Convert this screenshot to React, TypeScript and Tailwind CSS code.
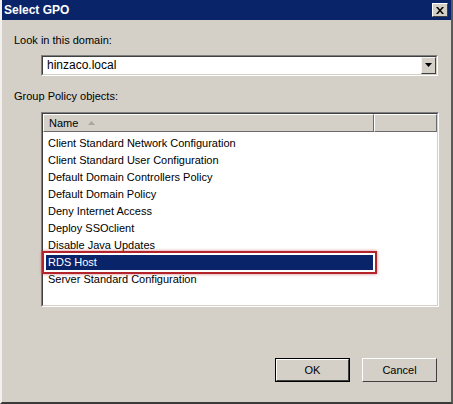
import { useState } from 'react'

const items = [
  'Client Standard Network Configuration',
  'Client Standard User Configuration',
  'Default Domain Controllers Policy',
  'Default Domain Policy',
  'Deny Internet Access',
  'Deploy SSOclient',
  'Disable Java Updates',
  'RDS Host',
  'Server Standard Configuration',
]

const font = { fontFamily: '"Liberation Sans", Arial, sans-serif' }

export default function App() {
  const [selected, setSelected] = useState('RDS Host')

  return (
    <div
      className="flex h-[404px] w-[453px] flex-col overflow-hidden border-b-2 border-l-2 border-r-2 border-b-[#3a3a3a] border-l-[#f2f0ec] border-r-[#5a5a5a] bg-[#d4d0c8] text-[11px] text-black"
      style={font}
    >
      {/* title bar */}
      <div className="flex h-[20px] items-center justify-between bg-[#0a246a] pl-[2px] pr-[3px]">
        <span className="text-[12px] font-bold text-white">Select GPO</span>
        <button className="flex h-[14px] w-[16px] items-center justify-center border border-b-[#404040] border-l-white border-r-[#404040] border-t-white bg-[#d4d0c8]">
          <svg width="8" height="7" viewBox="0 0 8 7">
            <path d="M0 0h2l2 2.5L6 0h2L5 3.5 8 7H6L4 4.5 2 7H0l3-3.5z" fill="#000" />
          </svg>
        </button>
      </div>

      <div className="flex flex-1 flex-col px-[12px]">
        <div className="mt-[12px]">Look in this domain:</div>

        {/* domain combo */}
        <div className="ml-[27px] mr-[1px] mt-[6px] flex h-[21px] border border-b-white border-l-[#808080] border-r-white border-t-[#808080]">
          <div className="flex flex-1 items-center border border-b-[#d4d0c8] border-l-[#404040] border-r-[#d4d0c8] border-t-[#404040] bg-white">
            <span className="flex-1 pl-[4px] text-[12px]">hinzaco.local</span>
            <div className="flex h-full w-[15px] items-center justify-center border border-b-[#404040] border-l-[#f4f4f4] border-r-[#404040] border-t-[#f4f4f4] bg-[#d4d0c8]">
              <svg width="7" height="4" viewBox="0 0 7 4">
                <path d="M0 0h7L3.5 4z" fill="#000" />
              </svg>
            </div>
          </div>
        </div>

        <div className="mt-[12px]">Group Policy objects:</div>

        {/* list view */}
        <div className="ml-[27px] mt-[8px] flex h-[195px] flex-col border border-b-white border-l-[#808080] border-r-white border-t-[#808080]">
          <div className="flex flex-1 flex-col border border-b-[#d4d0c8] border-l-[#404040] border-r-[#d4d0c8] border-t-[#404040] bg-white">
            <div className="flex h-[18px] shrink-0">
              <div className="flex w-[331px] items-center border border-b-[#6a6a6a] border-l-white border-r-[#6a6a6a] border-t-white bg-[#d4d0c8] pl-[5px]">
                Name
                <svg className="ml-[10px]" width="7" height="4" viewBox="0 0 7 4">
                  <path d="M3.5 0L7 4H0z" fill="#a8a6a0" />
                </svg>
              </div>
              <div className="flex-1 border border-b-[#6a6a6a] border-l-white border-r-[#6a6a6a] border-t-white bg-[#d4d0c8]" />
            </div>
            <div className="flex flex-col pt-[3px]">
              {items.map((it) => {
                const sel = it === selected
                return (
                  <div
                    key={it}
                    onClick={() => setSelected(it)}
                    className={
                      sel
                        ? 'relative -my-[3px] ml-[-1px] mr-[60px] h-[23px] border-2 border-[#b4242b] p-[2px] shadow-[0_0_3px_rgba(180,36,43,0.6)]'
                        : 'flex h-[17px] items-center pl-[5px]'
                    }
                  >
                    {sel ? (
                      <div className="flex h-full items-center bg-[#0a246a] pl-[2px] text-white">{it}</div>
                    ) : (
                      it
                    )}
                  </div>
                )
              })}
            </div>
          </div>
        </div>

        {/* buttons */}
        <div className="mt-[51px] flex justify-end gap-[12px] pr-[2px]">
          <button className="h-[24px] w-[75px] border border-black bg-[#d4d0c8]">
            <div className="flex h-full items-center justify-center border border-b-[#404040] border-l-white border-r-[#404040] border-t-white">
              OK
            </div>
          </button>
          <button className="flex h-[24px] w-[75px] items-center justify-center border border-b-[#404040] border-l-white border-r-[#404040] border-t-white bg-[#d4d0c8]">
            Cancel
          </button>
        </div>
      </div>
    </div>
  )
}
